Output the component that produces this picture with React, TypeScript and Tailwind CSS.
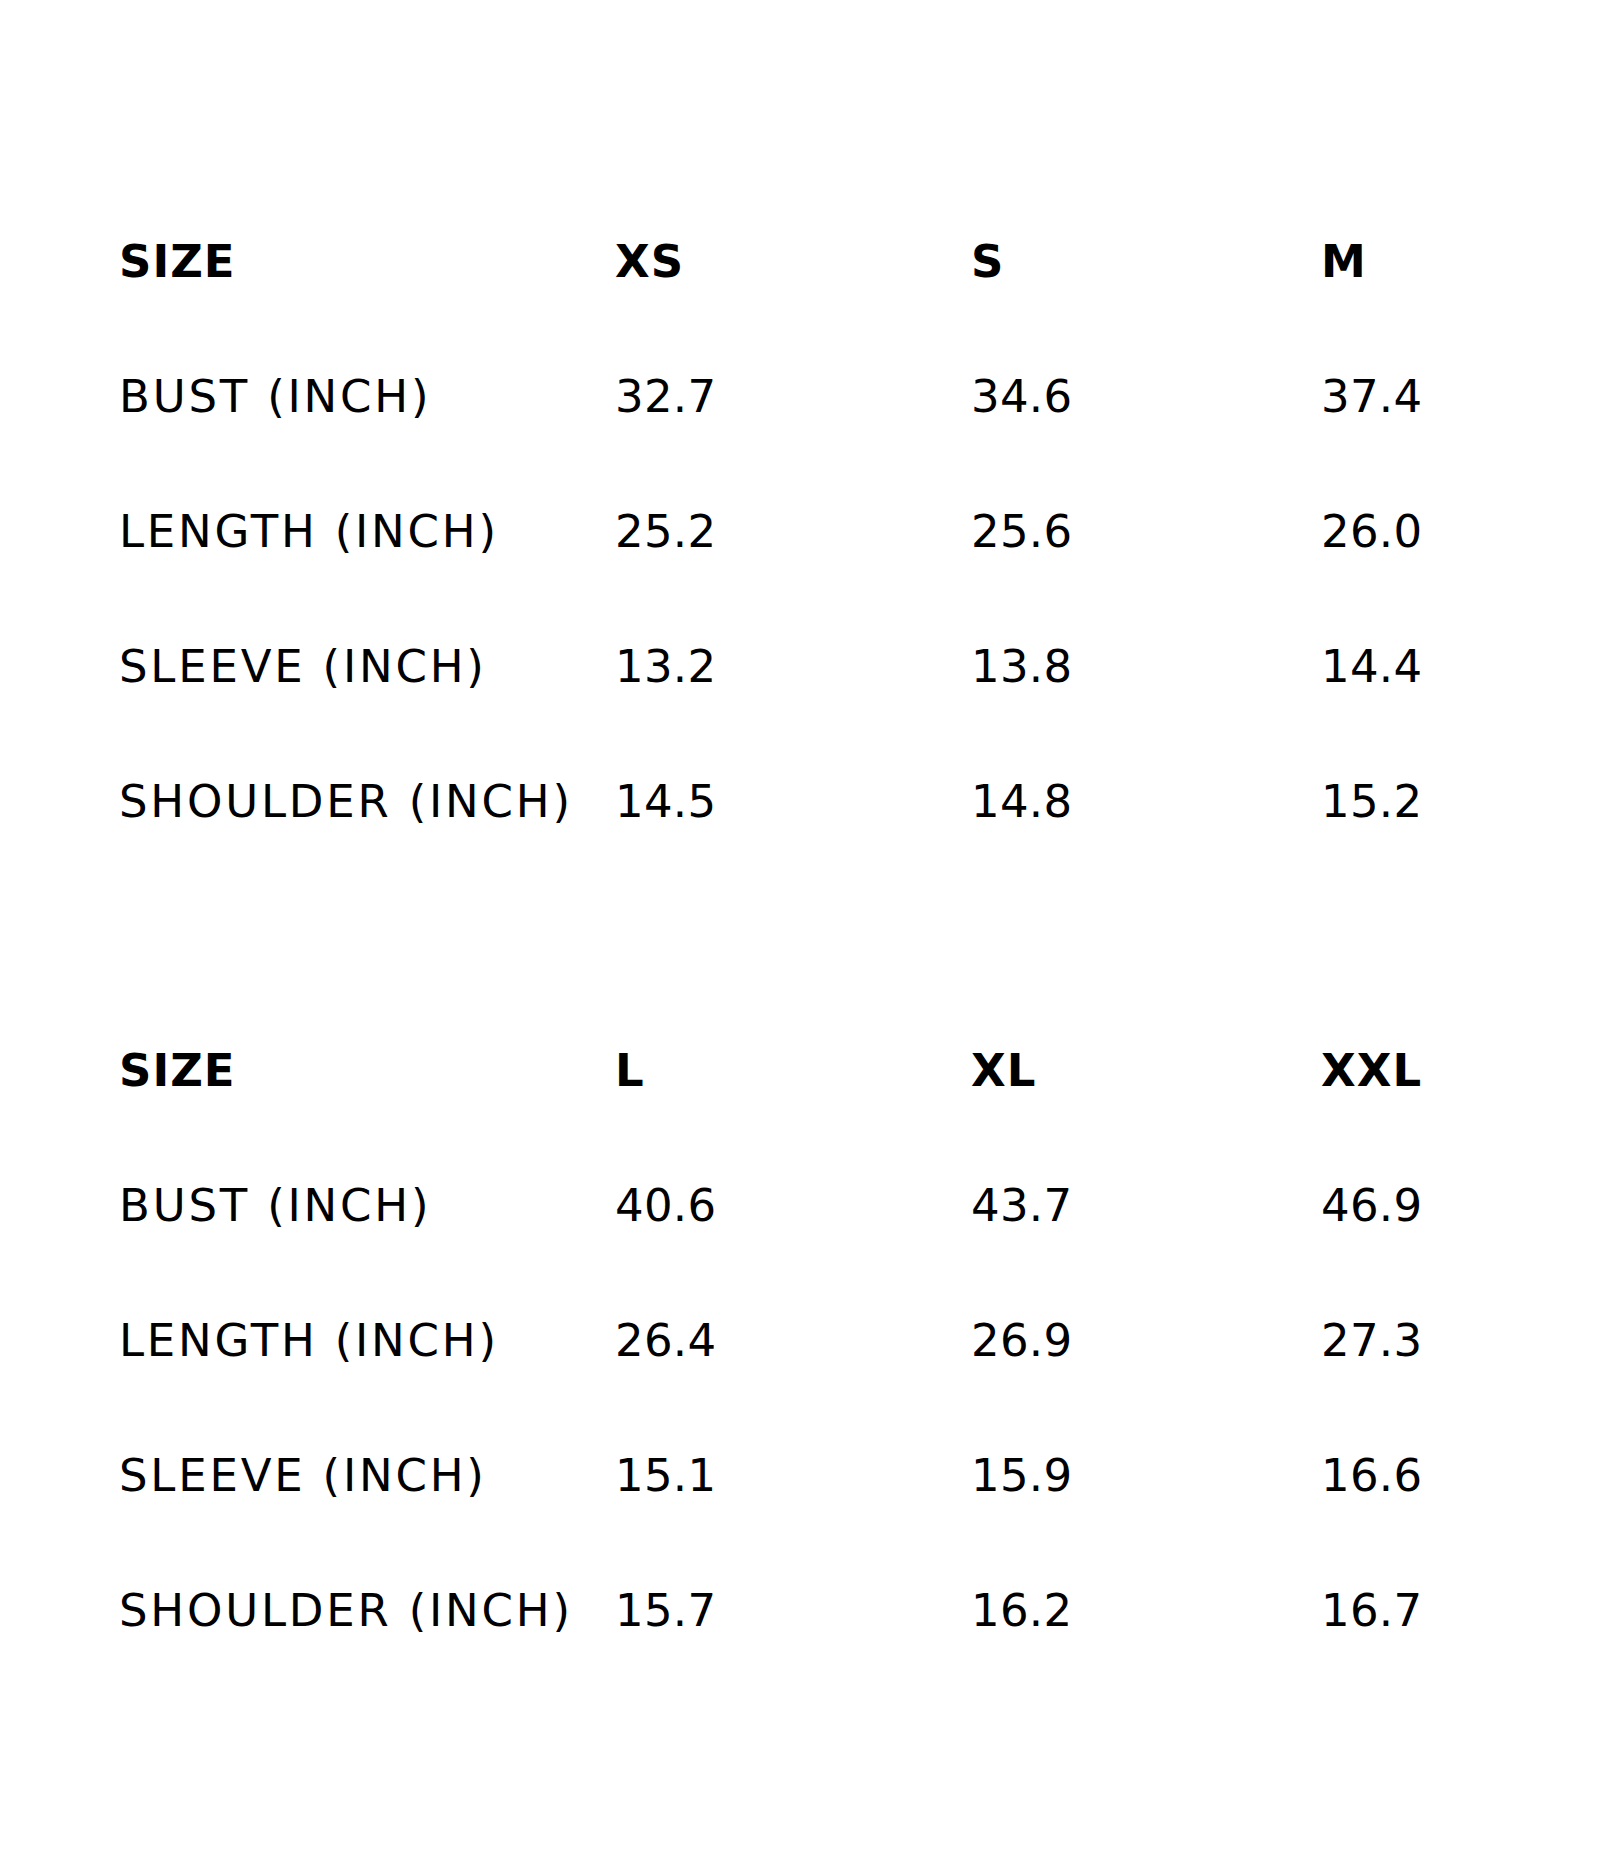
const TABLES = [
  {
    sizes: ["XS", "S", "M"],
    rows: [
      { label: "BUST (INCH)", values: ["32.7", "34.6", "37.4"] },
      { label: "LENGTH (INCH)", values: ["25.2", "25.6", "26.0"] },
      { label: "SLEEVE (INCH)", values: ["13.2", "13.8", "14.4"] },
      { label: "SHOULDER (INCH)", values: ["14.5", "14.8", "15.2"] },
    ],
  },
  {
    sizes: ["L", "XL", "XXL"],
    rows: [
      { label: "BUST (INCH)", values: ["40.6", "43.7", "46.9"] },
      { label: "LENGTH (INCH)", values: ["26.4", "26.9", "27.3"] },
      { label: "SLEEVE (INCH)", values: ["15.1", "15.9", "16.6"] },
      { label: "SHOULDER (INCH)", values: ["15.7", "16.2", "16.7"] },
    ],
  },
];

const GRID = "grid grid-cols-[496px_356px_350px_1fr] h-[135px] items-center";

function SizeTable({ sizes, rows }: (typeof TABLES)[number]) {
  return (
    <div>
      <div className={`${GRID} font-bold tracking-[1px]`}>
        <span>SIZE</span>
        {sizes.map((s) => (
          <span key={s}>{s}</span>
        ))}
      </div>
      {rows.map((row) => (
        <div key={row.label} className={GRID}>
          <span className="tracking-[2.8px]">{row.label}</span>
          {row.values.map((v, i) => (
            <span key={i} className="tracking-[0.3px]">
              {v}
            </span>
          ))}
        </div>
      ))}
    </div>
  );
}

export default function App() {
  return (
    <div
      className="w-[1600px] h-[1875px] bg-white text-black pl-[119px] pt-[194px] text-[45px] leading-[45px]"
      style={{ fontFamily: '"DejaVu Sans", sans-serif' }}
    >
      <div className="flex flex-col gap-[134px]">
        {TABLES.map((t, i) => (
          <SizeTable key={i} {...t} />
        ))}
      </div>
    </div>
  );
}
